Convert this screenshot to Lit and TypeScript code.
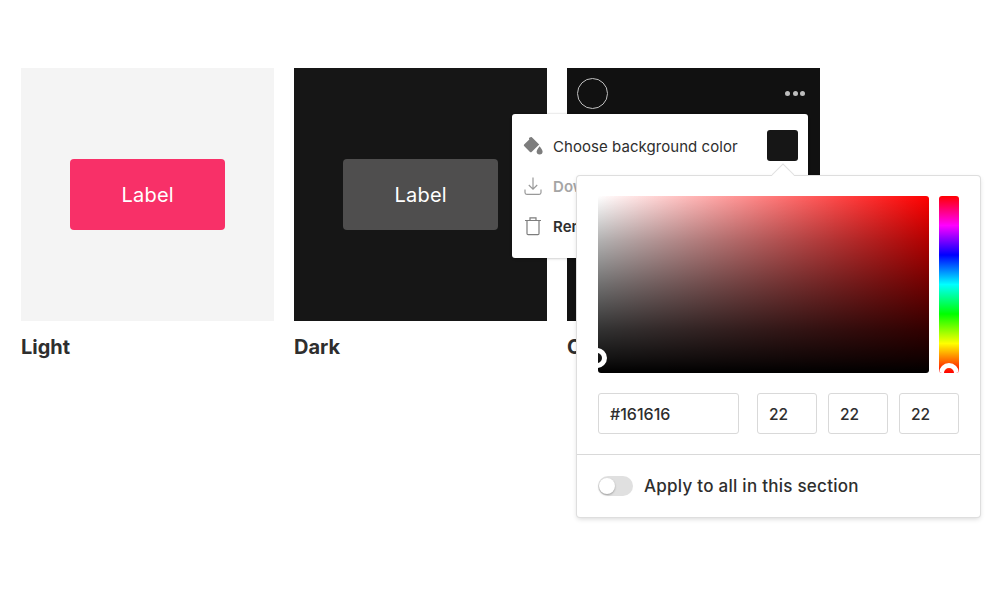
import { LitElement, html, css } from "lit";
import { customElement } from "lit/decorators.js";

@customElement("app-root")
export class AppRoot extends LitElement {
  static styles = css`
    :host {
      display: block;
      position: relative;
      width: 1000px;
      height: 590px;
      background: #fff;
      overflow: hidden;
      font-family: Inter, "Liberation Sans", sans-serif;
      color: #2e2e2e;
    }
    .grid {
      display: grid;
      grid-template-columns: repeat(3, 253px);
      gap: 20px;
      padding: 68px 0 0 21px;
    }
    .tile {
      height: 253px;
      display: flex;
      align-items: flex-start;
      box-sizing: border-box;
      padding: 91px 0 0 49px;
    }
    .light { background: #f4f4f4; }
    .dark { background: #161616; }
    .custom {
      background: #111;
      padding: 10px 15px 0 10px;
      justify-content: space-between;
    }
    .btn {
      width: 154.5px;
      height: 71px;
      box-sizing: border-box;
      padding: 1px 0 0 1px;
      border-radius: 4px;
      display: flex;
      align-items: center;
      justify-content: center;
      color: #fff;
      font-size: 20px;
      letter-spacing: 0.2px;
    }
    .pink { background: #f83068; }
    .gray { background: #4f4e4e; }
    .avatar {
      width: 31px;
      height: 31px;
      box-sizing: border-box;
      border: 1px solid #c0c0c0;
      border-radius: 50%;
    }
    .dots { display: flex; gap: 2.5px; padding-top: 13px; }
    .dots i { width: 5px; height: 5px; border-radius: 50%; background: #bdbdbd; }
    .name {
      font-size: 20px;
      font-weight: 700;
      line-height: 24px;
      margin-top: 14px;
    }
    .menu {
      position: absolute;
      left: 512px;
      top: 114px;
      width: 296px;
      height: 143.5px;
      box-sizing: border-box;
      background: #fff;
      border-radius: 3px;
      box-shadow: 0 0 2px rgba(0, 0, 0, 0.22), 0 1px 3px rgba(0, 0, 0, 0.12);
      padding: 12px 10px 0 11px;
      display: flex;
      flex-direction: column;
      font-size: 15px;
      letter-spacing: 0.05px;
    }
    .row { height: 40px; display: flex; align-items: center; gap: 10px; white-space: nowrap; }
    .row svg { width: 20px; height: 20px; flex: none; }
    .row .muted { color: #a5a5a5; font-weight: 600; }
    .row .strong { font-weight: 600; }
    .swatch {
      width: 31px;
      height: 31px;
      margin: -1px 0 0 auto;
      background: #161616;
      border-radius: 3px;
    }
    .panel {
      position: absolute;
      left: 577px;
      top: 176px;
      width: 403px;
      height: 341px;
      box-sizing: border-box;
      background: #fff;
      border-radius: 3px;
      box-shadow: 0 0 0 1px #dedede, 0 2px 5px rgba(0, 0, 0, 0.16);
    }
    .caret {
      position: absolute;
      left: 198px;
      top: -8px;
      width: 16px;
      height: 16px;
      background: #fff;
      transform: rotate(45deg);
      box-shadow: -1px -1px 0 #e2e2e2;
    }
    .pick { display: flex; gap: 10px; padding: 20px 21px 0; position: relative; }
    .sat, .hue { height: 177px; position: relative; overflow: hidden; border-radius: 3px; }
    .sat {
      width: 331px;
      background:
        linear-gradient(
          to bottom,
          rgba(0, 0, 0, 0) 0%,
          rgba(0, 0, 0, 0.3) 25%,
          rgba(0, 0, 0, 0.56) 50%,
          rgba(0, 0, 0, 0.8) 75%,
          rgba(0, 0, 0, 0.93) 92%,
          #000 100%
        ),
        linear-gradient(to right, #fff, #f00);
    }
    .hue {
      width: 20px;
      background: linear-gradient(to bottom, #f00, #f0f, #00f, #0ff, #0f0, #ff0, #f00);
    }
    .ring {
      position: absolute;
      width: 20px;
      height: 20px;
      box-sizing: border-box;
      border: 5px solid #fff;
      border-radius: 50%;
    }
    .sat .ring { left: -11px; top: 152px; }
    .hue .ring { left: 0; top: 167px; }
    .fields { display: flex; padding: 20px 21px 0; }
    .field {
      box-sizing: border-box;
      height: 41px;
      border: 1px solid #d9d9d9;
      border-radius: 3px;
      display: flex;
      align-items: center;
      padding: 1px 0 0 11px;
      font-size: 16px;
      font-weight: 500;
    }
    .hex { width: 141px; margin-right: 18px; }
    .num { width: 60px; margin-right: 11px; font-size: 15.5px; }
    .num:last-child { margin-right: 0; }
    .foot {
      margin-top: 20px;
      border-top: 1px solid #d9d9d9;
      display: flex;
      align-items: center;
      gap: 11px;
      padding: 20px 21px;
      font-size: 17px;
      font-weight: 500;
      line-height: 22px;
      letter-spacing: 0.26px;
    }
    .toggle {
      width: 35px;
      height: 20px;
      border-radius: 10px;
      background: #e0e0e0;
      position: relative;
    }
    .knob {
      position: absolute;
      left: 1px;
      top: 2px;
      width: 16px;
      height: 16px;
      border-radius: 50%;
      background: #fff;
      box-shadow: 0 1px 2px rgba(0, 0, 0, 0.3);
    }
  `;

  render() {
    return html`
      <div class="grid">
        <div>
          <div class="tile light"><div class="btn pink">Label</div></div>
          <div class="name">Light</div>
        </div>
        <div>
          <div class="tile dark"><div class="btn gray">Label</div></div>
          <div class="name">Dark</div>
        </div>
        <div>
          <div class="tile custom">
            <div class="avatar"></div>
            <div class="dots"><i></i><i></i><i></i></div>
          </div>
          <div class="name">Custom</div>
        </div>
      </div>

      <div class="menu">
        <div class="row">
          <svg viewBox="0 0 20 20" fill="#7d7d7d">
            <path d="M7.2 1.2 L8.6 0.9 L16.2 8.4 L8.6 16 Q7.8 16.7 7 16 L1.1 10.1 Q0.4 9.3 1.1 8.5 L6.3 3.4 L5.9 2.4 Q6 1.5 7.2 1.2 Z" />
            <path d="M16.6 10.2 Q19.6 13.8 19.6 15.6 A3 3 0 0 1 13.6 15.6 Q13.6 13.8 16.6 10.2 Z" />
          </svg>
          <span>Choose background color</span>
          <div class="swatch"></div>
        </div>
        <div class="row">
          <svg viewBox="0 0 20 20" fill="none" stroke="#999" stroke-width="1.2">
            <path d="M10 1.5 V13 M5.8 9 L10 13.2 L14.2 9" />
            <path d="M2 13.5 V16.5 Q2 18.3 3.8 18.3 H16.2 Q18 18.3 18 16.5 V13.5" />
          </svg>
          <span class="muted">Download</span>
        </div>
        <div class="row">
          <svg viewBox="0 0 20 20" fill="none" stroke="#7d7d7d" stroke-width="1.2">
            <path d="M2 4.5 H18 M7 4.5 V1.8 H13 V4.5" />
            <path d="M4 4.5 V17.5 Q4 18.6 5.1 18.6 H14.9 Q16 18.6 16 17.5 V4.5" />
          </svg>
          <span class="strong">Remove</span>
        </div>
      </div>

      <div class="panel">
        <div class="caret"></div>
        <div class="pick">
          <div class="sat"><div class="ring"></div></div>
          <div class="hue"><div class="ring"></div></div>
        </div>
        <div class="fields">
          <div class="field hex">#161616</div>
          <div class="field num">22</div>
          <div class="field num">22</div>
          <div class="field num">22</div>
        </div>
        <div class="foot">
          <div class="toggle"><div class="knob"></div></div>
          <span>Apply to all in this section</span>
        </div>
      </div>
    `;
  }
}
